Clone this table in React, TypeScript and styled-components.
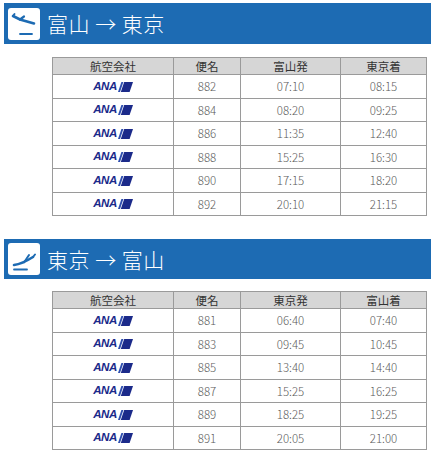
import React from "react";
import styled, { createGlobalStyle } from "styled-components";

const GlobalStyle = createGlobalStyle`
  html, body { margin: 0; padding: 0; background: #ffffff; overflow: hidden; }
  body { font-family: "Noto Sans CJK JP", "Noto Sans", sans-serif; }
`;

const Page = styled.div`
  padding: 3px 0 0 4px;
  width: 427px;
  overflow: hidden;
`;

const Section = styled.section<{ $gap: number }>`
  margin-bottom: ${(p) => p.$gap}px;
`;

const Bar = styled.div<{ $h: number }>`
  height: ${(p) => p.$h}px;
  background: #1d6bb3;
  display: flex;
  align-items: center;
  padding-left: 4px;
  gap: 7px;
`;

const IconBox = styled.div`
  width: 32px;
  height: 32px;
  background: #ffffff;
  border-radius: 3px;
  display: flex;
  align-items: center;
  justify-content: center;
  flex: none;
`;

const Title = styled.h2`
  margin: 0;
  color: #ffffff;
  font-family: "Noto Sans CJK JP", sans-serif;
  font-weight: 300;
  font-size: 21px;
  line-height: 1;
  letter-spacing: 0.5px;
`;

const TableWrap = styled.div<{ $top: number }>`
  margin: ${(p) => p.$top}px 0 0 48px;
`;

const Table = styled.table`
  width: 374px;
  border-collapse: collapse;
  table-layout: fixed;
  font-family: "Noto Sans CJK JP", sans-serif;
  font-size: 11.5px;
`;

const HeadCell = styled.th`
  background: #d6d6d6;
  color: #333;
  font-weight: 400;
  height: 16px;
  padding: 0;
  border: 1px solid #9a9a9a;
  text-align: center;
  line-height: 15px;
`;

const Row = styled.tr`
  height: 23.5px;
`;

const Cell = styled.td`
  border: 1px solid #9a9a9a;
  padding: 0;
  text-align: center;
  color: #5a5a5a;
  font-weight: 300;
  line-height: 14px;
`;

const Logo = styled.span`
  display: inline-flex;
  align-items: center;
  gap: 1px;
  vertical-align: middle;
  margin-top: -3px;
`;

const LogoText = styled.span`
  font-family: "Liberation Sans", Arial, sans-serif;
  font-style: italic;
  font-weight: 700;
  font-size: 11.5px;
  color: #1b2a8a;
  letter-spacing: -0.4px;
  line-height: 1;
`;

function AnaLogo() {
  return (
    <Logo>
      <LogoText>ANA</LogoText>
      <svg width="15" height="10" viewBox="0 0 15 10">
        <polygon points="3.4,0 5.4,0 2,10 0,10" fill="#2f4fb0" />
        <polygon points="6.2,0 15,0 11.6,10 2.8,10" fill="#1b2a8a" />
      </svg>
    </Logo>
  );
}

function Departure() {
  return (
    <svg width="28" height="28" viewBox="0 0 28 28" fill="none" stroke="#1d6bb3" strokeLinecap="round">
      <path d="M3 6 L10 9.5 L24 13.5" strokeWidth="2.6" />
      <path d="M10 9.5 L14 6.5" strokeWidth="2.2" />
      <path d="M3 6 L4.5 4" strokeWidth="2" />
      <path d="M10 24 H22" strokeWidth="1.8" />
    </svg>
  );
}

function Arrival() {
  return (
    <svg width="28" height="28" viewBox="0 0 28 28" fill="none" stroke="#1d6bb3" strokeLinecap="round">
      <path d="M4 20 Q12 19 23 12" strokeWidth="2.6" />
      <path d="M14 17.5 L19 10" strokeWidth="2" />
      <path d="M23 12 L25 9.5" strokeWidth="2" />
      <path d="M4 24.5 H17" strokeWidth="1.8" />
    </svg>
  );
}

type Flight = { no: string; dep: string; arr: string };

const outbound: Flight[] = [
  { no: "882", dep: "07:10", arr: "08:15" },
  { no: "884", dep: "08:20", arr: "09:25" },
  { no: "886", dep: "11:35", arr: "12:40" },
  { no: "888", dep: "15:25", arr: "16:30" },
  { no: "890", dep: "17:15", arr: "18:20" },
  { no: "892", dep: "20:10", arr: "21:15" },
];

const inbound: Flight[] = [
  { no: "881", dep: "06:40", arr: "07:40" },
  { no: "883", dep: "09:45", arr: "10:45" },
  { no: "885", dep: "13:40", arr: "14:40" },
  { no: "887", dep: "15:25", arr: "16:25" },
  { no: "889", dep: "18:25", arr: "19:25" },
  { no: "891", dep: "20:05", arr: "21:00" },
];

function Timetable({ from, to, flights }: { from: string; to: string; flights: Flight[] }) {
  return (
    <Table>
      <colgroup>
        <col style={{ width: 121 }} />
        <col style={{ width: 67 }} />
        <col style={{ width: 100 }} />
        <col style={{ width: 86 }} />
      </colgroup>
      <thead>
        <tr>
          <HeadCell>航空会社</HeadCell>
          <HeadCell>便名</HeadCell>
          <HeadCell>{from}発</HeadCell>
          <HeadCell>{to}着</HeadCell>
        </tr>
      </thead>
      <tbody>
        {flights.map((f) => (
          <Row key={f.no}>
            <Cell>
              <AnaLogo />
            </Cell>
            <Cell>{f.no}</Cell>
            <Cell>{f.dep}</Cell>
            <Cell>{f.arr}</Cell>
          </Row>
        ))}
      </tbody>
    </Table>
  );
}

export default function App() {
  return (
    <>
      <GlobalStyle />
      <Page>
        <Section $gap={23}>
          <Bar $h={41}>
            <IconBox>
              <Departure />
            </IconBox>
            <Title>富山 → 東京</Title>
          </Bar>
          <TableWrap $top={13}>
            <Timetable from="富山" to="東京" flights={outbound} />
          </TableWrap>
        </Section>
        <Section $gap={0}>
          <Bar $h={40}>
            <IconBox>
              <Arrival />
            </IconBox>
            <Title>東京 → 富山</Title>
          </Bar>
          <TableWrap $top={12}>
            <Timetable from="東京" to="富山" flights={inbound} />
          </TableWrap>
        </Section>
      </Page>
    </>
  );
}
